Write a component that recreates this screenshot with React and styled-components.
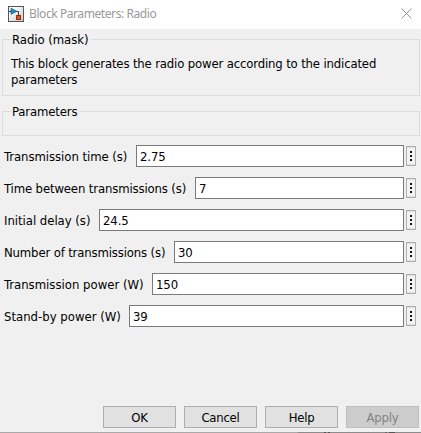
import React from "react";
import styled, { createGlobalStyle } from "styled-components";

const GlobalStyle = createGlobalStyle`
  *, *::before, *::after { box-sizing: border-box; }
  body {
    margin: 0;
    overflow: hidden;
    background: #f0f0f0;
    font: 13px/16px "DejaVu Sans Condensed", "Liberation Sans", sans-serif;
    color: #000;
  }
`;

const Dialog = styled.div`
  display: flex;
  flex-direction: column;
  width: 421px;
  height: 433px;
  background: #f0f0f0;
`;

const BottomEdge = styled.div`
  flex: none;
  height: 1px;
  background: linear-gradient(
    90deg,
    #a8a8a8 298px,
    #8c8c8c 298px 324px,
    #555 324px 326px,
    #8c8c8c 326px 328px,
    #555 328px 330px,
    #8c8c8c 330px 385px,
    #666 385px 387px,
    #8c8c8c 387px 389px,
    #555 389px 395px,
    #8c8c8c 395px
  );
`;

const TitleBar = styled.header`
  display: flex;
  flex: none;
  align-items: center;
  height: 29px;
  padding: 0 9px 2px 8px;
  background: #fff;
`;

const Title = styled.h1`
  flex: 1;
  margin: 0 0 0 5px;
  font: 400 12px/16px "Noto Sans", sans-serif;
  letter-spacing: -0.42px;
  color: #999;
`;

const CloseButton = styled.button`
  display: flex;
  padding: 0;
  border: 0;
  background: none;
`;

const Group = styled.fieldset`
  flex: none;
  min-width: 0;
  height: ${(p) => p.$height}px;
  margin: 2px 1px ${(p) => p.$after}px 2px;
  padding: 9px 8px 0;
  border: 1px solid #dcdcdc;
`;

const Legend = styled.legend`
  padding: 2px 2px 0 1px;
  line-height: 14px;
  letter-spacing: ${(p) => p.$tracking}px;
`;

const Description = styled.p`
  margin: 0;
  letter-spacing: -0.155px;
`;

const Fields = styled.div`
  display: flex;
  flex-direction: column;
  gap: 10px;
  padding: 0 5px 0 4px;
`;

const Field = styled.div`
  display: flex;
  align-items: center;
  height: 22px;
`;

const Label = styled.label`
  flex: none;
  width: ${(p) => p.$width}px;
  padding-top: 1px;
  white-space: nowrap;
  letter-spacing: ${(p) => p.$tracking}px;
`;

const Input = styled.input`
  flex: 1;
  min-width: 0;
  height: 22px;
  margin-right: 2px;
  padding: 1px 3px 0;
  border: 1px solid #7a7a7a;
  border-radius: 0;
  outline: 0;
  background: #fff;
  color: #000;
  font: inherit;
  letter-spacing: -0.1px;
`;

const MoreButton = styled.button`
  display: flex;
  flex: none;
  flex-direction: column;
  align-items: center;
  justify-content: center;
  gap: 2px;
  width: 10px;
  height: 20px;
  padding: 0;
  border: 1px solid #adadad;
  background: #f4f4f4;
  box-shadow: inset 0 1px #dedede, inset 0 -1px #dedede;
`;

const Dot = styled.span`
  width: 2px;
  height: 2px;
  background: #111;
`;

const Footer = styled.footer`
  display: flex;
  justify-content: flex-end;
  gap: 8px;
  margin-top: auto;
  padding: 0 2px 4px 0;
`;

const Button = styled.button`
  width: 73px;
  height: 22px;
  padding: 1px 0 0;
  border: 1px solid #adadad;
  background: #e1e1e1;
  color: #000;
  font: inherit;
  letter-spacing: -0.25px;

  &:disabled {
    border-color: #bfbfbf;
    background: #ccc;
    color: #838383;
  }
`;

const fields = [
  { label: "Transmission time (s)", value: "2.75", width: 132, tracking: -0.05 },
  { label: "Time between transmissions (s)", value: "7", width: 191, tracking: -0.14 },
  { label: "Initial delay (s)", value: "24.5", width: 95, tracking: -0.03 },
  { label: "Number of transmissions (s)", value: "30", width: 170, tracking: -0.15 },
  { label: "Transmission power (W)", value: "150", width: 148, tracking: 0 },
  { label: "Stand-by power (W)", value: "39", width: 125, tracking: 0 },
];

function BlockIcon() {
  return (
    <svg width="16" height="16" viewBox="0 0 16 16">
      <defs>
        <linearGradient id="face" x1="0" y1="0" x2="1" y2="1">
          <stop offset="0.2" stopColor="#fff" />
          <stop offset="1" stopColor="#c9c9c9" />
        </linearGradient>
      </defs>
      <rect x="0.5" y="0.5" width="15" height="15" fill="url(#face)" stroke="#555" />
      <path d="M1 5.5H3M8 5.5H10.5V9" fill="none" stroke="#333" />
      <path d="M3 2.2V8.3L8.8 5.3Z" fill="#2489bd" stroke="#17648f" strokeWidth="0.8" />
      <rect x="8.5" y="9.5" width="4" height="4" fill="#d9532c" stroke="#96300f" />
    </svg>
  );
}

function CloseIcon() {
  return (
    <svg width="11" height="11" viewBox="0 0 11 11">
      <path d="M0.5 0.5L10.5 10.5M10.5 0.5L0.5 10.5" stroke="#909090" strokeWidth="1" />
    </svg>
  );
}

export default function App() {
  return (
    <>
      <GlobalStyle />
      <Dialog>
        <TitleBar>
          <BlockIcon />
          <Title>Block Parameters: Radio</Title>
          <CloseButton aria-label="Close">
            <CloseIcon />
          </CloseButton>
        </TitleBar>
        <Group $height={65} $after={5}>
          <Legend $tracking={-0.05}>Radio (mask)</Legend>
          <Description>
            This block generates the radio power according to the indicated
            <br />
            parameters
          </Description>
        </Group>
        <Group $height={33} $after={9}>
          <Legend $tracking={-0.15}>Parameters</Legend>
        </Group>
        <Fields>
          {fields.map((f) => (
            <Field key={f.label}>
              <Label $width={f.width} $tracking={f.tracking}>
                {f.label}
              </Label>
              <Input defaultValue={f.value} aria-label={f.label} />
              <MoreButton aria-label="More options">
                <Dot />
                <Dot />
                <Dot />
              </MoreButton>
            </Field>
          ))}
        </Fields>
        <Footer>
          <Button>OK</Button>
          <Button>Cancel</Button>
          <Button>Help</Button>
          <Button disabled>Apply</Button>
        </Footer>
        <BottomEdge />
      </Dialog>
    </>
  );
}
